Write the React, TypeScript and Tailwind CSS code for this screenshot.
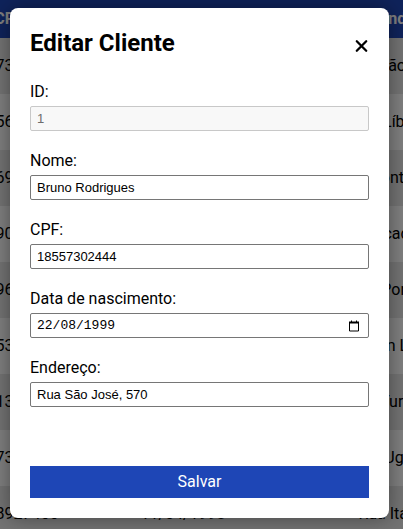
import { useState } from "react";

const clients = [
  { cpf: "18557302444", birth: "22/08/1999", address: "Rua São José, 570" },
  { cpf: "20415638127", birth: "03/11/1987", address: "Rua Líbano, 1450" },
  { cpf: "31726950483", birth: "19/02/1992", address: "Rua Monte Real, 1021" },
  { cpf: "47189036215", birth: "27/06/1984", address: "Rua Ficadelli, 388 - A" },
  { cpf: "52809641730", birth: "08/09/1990", address: "Rua Portugal, 621" },
  { cpf: "63045327918", birth: "14/12/1995", address: "Rua San Luis Norte, 7" },
  { cpf: "74251398062", birth: "30/01/1979", address: "Rua Turquia, 9301" },
  { cpf: "85367314209", birth: "05/05/2001", address: "Rua Uganda, 250" },
  { cpf: "96048927455", birth: "11/04/1998", address: "Rua Itália, 8721" },
];

const textBox =
  "h-[25px] w-full rounded-[2px] border border-[#767676] bg-white px-1.5 text-[13px] text-black";

function ClientTable() {
  return (
    <div className="h-full overflow-hidden">
      <table className="-ml-[60px] w-[598px] table-fixed border-collapse text-center">
        <colgroup>
          <col className="w-[138px]" />
          <col className="w-[210px]" />
          <col className="w-[250px]" />
        </colgroup>
        <thead className="bg-[#1e46b6] text-white">
          <tr className="h-[38px]">
            <th>CPF</th>
            <th>Data de nascimento</th>
            <th>Endereço</th>
          </tr>
        </thead>
        <tbody>
          {clients.map((client) => (
            <tr key={client.cpf} className="h-14 bg-white odd:bg-[#e6e6e6]">
              <td>{client.cpf}</td>
              <td>{client.birth}</td>
              <td>{client.address}</td>
            </tr>
          ))}
        </tbody>
      </table>
    </div>
  );
}

function CloseIcon() {
  return (
    <svg viewBox="0 0 16 16" className="size-4" fill="none" stroke="currentColor" strokeWidth="2.3" strokeLinecap="round">
      <path d="M3.8 3.3 13.2 12.7M13.2 3.3 3.8 12.7" />
    </svg>
  );
}

function CalendarIcon() {
  return (
    <svg viewBox="0 0 12 12" className="size-3" fill="none" stroke="currentColor">
      <path d="M1.5 2.5h9v8.5h-9z" strokeLinejoin="round" />
      <path d="M1 2.5h10" strokeWidth="2" />
      <path d="M3.5 0.5v2M8.5 0.5v2" />
    </svg>
  );
}

export default function App() {
  const [name, setName] = useState("Bruno Rodrigues");
  const [cpf, setCpf] = useState("18557302444");
  const [birth, setBirth] = useState("22/08/1999");
  const [address, setAddress] = useState("Rua São José, 570");

  return (
    <div className="relative h-screen overflow-hidden bg-white font-[Roboto,sans-serif] text-base text-black">
      <ClientTable />
      <div className="absolute inset-0 flex items-start justify-center bg-black/50 pt-2 pr-3.5 pl-2.5">
        <div
          role="dialog"
          aria-modal="true"
          aria-labelledby="dialog-title"
          className="w-full max-w-[500px] rounded-lg bg-white p-5 shadow-[0_0_20px_rgba(0,0,0,0.4)]"
        >
          <div className="flex items-start justify-between">
            <h2 id="dialog-title" className="text-2xl leading-[30px] font-bold">
              Editar Cliente
            </h2>
            <button type="button" aria-label="Fechar" className="pt-2.5">
              <CloseIcon />
            </button>
          </div>
          <form className="flex flex-col gap-5 pt-6" onSubmit={(e) => e.preventDefault()}>
            <div className="flex flex-col gap-1">
              <label htmlFor="id" className="leading-5">ID:</label>
              <input
                id="id"
                disabled
                value="1"
                className="h-[25px] w-full rounded-[2px] border border-[#c8c8c8] bg-[#f8f8f8] px-1.5 font-[Liberation_Sans,sans-serif] text-[13px] text-[#6d6d6d]"
              />
            </div>
            <div className="flex flex-col gap-1">
              <label htmlFor="name" className="leading-5">Nome:</label>
              <input id="name" value={name} onChange={(e) => setName(e.target.value)} className={`${textBox} font-[Liberation_Sans,sans-serif]`} />
            </div>
            <div className="flex flex-col gap-1">
              <label htmlFor="cpf" className="leading-5">CPF:</label>
              <input id="cpf" value={cpf} onChange={(e) => setCpf(e.target.value)} className={`${textBox} font-[Liberation_Sans,sans-serif]`} />
            </div>
            <div className="flex flex-col gap-1">
              <label htmlFor="birth" className="leading-5">Data de nascimento:</label>
              <div className="flex h-[25px] items-center rounded-[2px] border border-[#767676] pr-2 pl-1.5">
                <input
                  id="birth"
                  inputMode="numeric"
                  value={birth}
                  onChange={(e) => setBirth(e.target.value)}
                  className="min-w-0 flex-1 font-[Liberation_Mono,monospace] text-[13px] outline-none"
                />
                <button type="button" aria-label="Abrir calendário">
                  <CalendarIcon />
                </button>
              </div>
            </div>
            <div className="flex flex-col gap-1">
              <label htmlFor="address" className="leading-5">Endereço:</label>
              <input id="address" value={address} onChange={(e) => setAddress(e.target.value)} className={`${textBox} font-[Liberation_Sans,sans-serif]`} />
            </div>
            <button type="submit" className="mt-[39px] h-8 w-full bg-[#1e46b6] text-white">
              Salvar
            </button>
          </form>
        </div>
      </div>
    </div>
  );
}
